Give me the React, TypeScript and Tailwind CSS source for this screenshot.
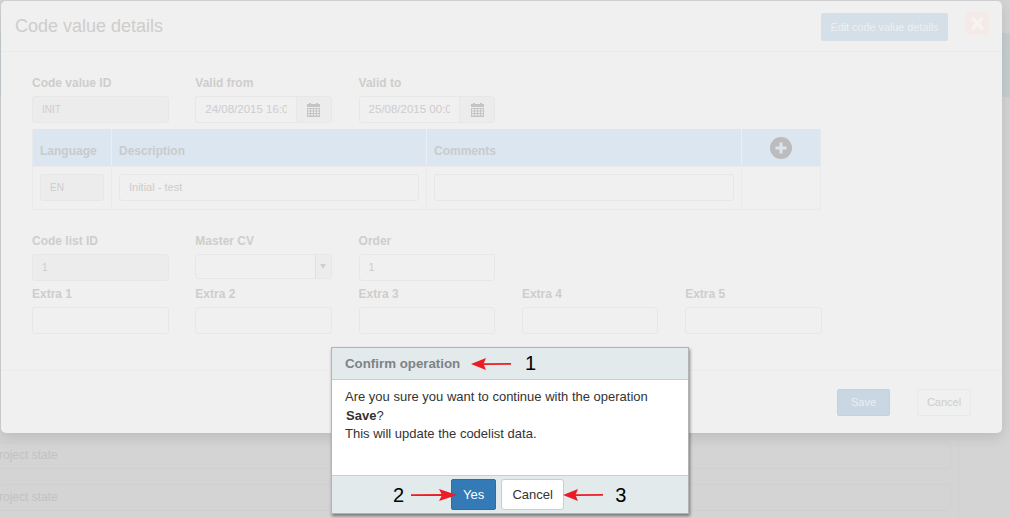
const Label = ({ children }: { children: string }) => (
  <label className="block h-[13px] text-[12px] leading-[13px] font-bold text-[#cfcdcb]">{children}</label>
);

const Box = ({ value, grey }: { value?: string; grey?: boolean }) => (
  <div
    className={`h-[27px] mt-[6px] px-[9px] border border-[#e7e7e7] rounded-[3px] leading-[25px] text-[#cdcdcd] ${grey ? "text-[10px] bg-[#ececec]" : "text-[11px] bg-[#f0f0f0]"}`}
  >
    {value}
  </div>
);

const Field = ({ label, value, grey }: { label: string; value?: string; grey?: boolean }) => (
  <div>
    <Label>{label}</Label>
    <Box value={value} grey={grey} />
  </div>
);

const CalendarIcon = () => (
  <svg width="13" height="14" viewBox="0 0 13 14" className="fill-[#c4c4c4]">
    <rect x="2" y="0" width="2" height="3" />
    <rect x="9" y="0" width="2" height="3" />
    <rect x="0" y="1" width="13" height="3" />
    <path d="M0 5h13v9H0z M1 6v1.5h2V6z M4 6v1.5h2V6z M7 6v1.5h2V6z M10 6v1.5h2V6z M1 8.5V10h2V8.5z M4 8.5V10h2V8.5z M7 8.5V10h2V8.5z M10 8.5V10h2V8.5z M1 11v1.5h2V11z M4 11v1.5h2V11z M7 11v1.5h2V11z M10 11v1.5h2V11z" fillRule="evenodd" />
  </svg>
);

const DateField = ({ label, value }: { label: string; value: string }) => (
  <div>
    <Label>{label}</Label>
    <div className="flex h-[27px] mt-[6px] border border-[#e7e7e7] rounded-[3px] text-[11.5px] text-[#cdcdcd]">
      <div className="flex-1 min-w-0 pl-[9px] pr-[9px] leading-[25px]">
        <div className="overflow-hidden whitespace-nowrap">{value}</div>
      </div>
      <div className="w-[35px] shrink-0 flex items-center justify-center bg-[#ececec] border-l border-[#e7e7e7] rounded-r-[3px]">
        <CalendarIcon />
      </div>
    </div>
  </div>
);

// little red hand-drawn arrows from the annotated screenshot
const ArrowLeft = () => (
  <svg width="40" height="14" viewBox="0 0 40 14" className="shrink-0">
    <path d="M12 6.3L40 5.9v1.8L12 8.1z" fill="#ed1c24" />
    <path d="M0 7L15 1l-2.5 6L15 13z" fill="#ed1c24" />
  </svg>
);

const ArrowRight = () => (
  <svg width="46" height="14" viewBox="0 0 46 14" className="shrink-0">
    <path d="M0 6.3L34 6.1v1.8L0 8.1z" fill="#ed1c24" />
    <path d="M46 7L28 1l3 6-3 6z" fill="#ed1c24" />
  </svg>
);

const Num = ({ children }: { children: string }) => (
  <span className="text-[20px] leading-[24px] text-black">{children}</span>
);

const BgRow = () => (
  <div className="flex h-[42px]">
    <div className="w-[953px] shrink-0 -ml-[2px] h-[27px] pt-[5px] border border-[#d0d0d0] rounded-[3px] text-[12px] leading-[15px] text-[#c2c2c2]">
      roject state
    </div>
    <div className="ml-[7px] flex-1 border-l border-[#d0d0d0]" />
  </div>
);

const App = () => {
  return (
    <div className="relative w-[1010px] h-[518px] overflow-hidden bg-[#d4d4d4] font-['Liberation_Sans',Arial,sans-serif]">
      {/* page behind the modal */}
      <div className="flex flex-col">
        <div className="h-[33px]" />
        <div className="h-[64px] bg-[#c6ced2]" />
        <div className="h-[345px]" />
        <BgRow />
        <BgRow />
      </div>

      {/* main modal, faded */}
      <div className="absolute left-[1px] top-[1px] w-[1001px] h-[432px] bg-[#f0f0f0] rounded-[5px] shadow-[0_4px_14px_rgba(0,0,0,0.12)]">
        <div className="flex items-center h-[51px] border-b border-[#ebebeb] pl-[14px]">
          <h4 className="text-[18px] text-[#cfcdcb]">Code value details</h4>
          <button className="ml-auto h-[28px] w-[127px] mt-[1px] pt-[2px] bg-[#d5dfe8] rounded-[2px] text-[10.8px] text-[#eef0f2]">
            Edit code value details
          </button>
          <div className="w-[23px] h-[23px] ml-[18px] mr-[13px] -mt-[5px] rounded-[3px] bg-[#f4ebe8] flex items-center justify-center">
            <svg width="15" height="15" viewBox="0 0 15 15">
              <path d="M3 3l9 9M12 3l-9 9" stroke="#f7f3f1" strokeWidth="3.4" strokeLinecap="round" />
            </svg>
          </div>
        </div>

        <div className="h-[318px] pl-[31px] pt-[25px]">
          <div className="grid w-[789.7px] grid-cols-5 gap-x-[26.8px]">
            <Field label="Code value ID" value="INIT" grey />
            <DateField label="Valid from" value="24/08/2015 16:00" />
            <DateField label="Valid to" value="25/08/2015 00:00" />
          </div>

          <div className="w-[789px] h-[81px] mt-[6px] border-l border-r border-b border-[#e9e9e9]">
            <div className="grid grid-cols-[78px_315px_315px_1fr] h-[38px] bg-[#dce6f0] border-b border-[#ebebeb] text-[12px] font-bold text-[#c8cbcd]">
              <div className="pl-[7px] pt-[16px] leading-[13px]">Language</div>
              <div className="pl-[7px] pt-[16px] leading-[13px] border-l border-[#ebeff3]">Description</div>
              <div className="pl-[7px] pt-[16px] leading-[13px] border-l border-[#ebeff3]">Comments</div>
              <div className="flex justify-center pt-[8px] border-l border-[#ebeff3]">
                <svg width="22" height="22" viewBox="0 0 22 22">
                  <circle cx="11" cy="11" r="11" fill="#bcbcbc" />
                  <path d="M11 5.5v11M5.5 11h11" stroke="#dce6f0" strokeWidth="3" />
                </svg>
              </div>
            </div>
            <div className="grid grid-cols-[78px_315px_315px_1fr] h-[42px] text-[#cdcdcd]">
              <div className="px-[7px] pt-[7px]">
                <div className="h-[27px] pl-[9px] text-[10px] leading-[25px] bg-[#ececec] border border-[#e7e7e7] rounded-[3px]">EN</div>
              </div>
              <div className="pl-[7px] pr-[7px] pt-[7px] border-l border-[#e9e9e9]">
                <div className="h-[27px] pl-[9px] text-[11px] leading-[25px] border border-[#e7e7e7] rounded-[3px]">Initial - test</div>
              </div>
              <div className="pl-[7px] pr-[7px] pt-[7px] border-l border-[#e9e9e9]">
                <div className="h-[27px] border border-[#e7e7e7] rounded-[3px]" />
              </div>
              <div className="border-l border-[#e9e9e9]" />
            </div>
          </div>

          <div className="grid w-[789.7px] grid-cols-5 gap-x-[26.8px] mt-[25px]">
            <Field label="Code list ID" value="1" grey />
            <div>
              <Label>Master CV</Label>
              <div className="flex h-[25px] mt-[6px] border border-[#e7e7e7] rounded-[3px]">
                <div className="flex-1" />
                <div className="w-[16px] flex items-center justify-center bg-[#ececec] border-l border-[#e0e0e0] rounded-r-[3px]">
                  <div className="w-0 h-0 border-x-[3.5px] border-x-transparent border-t-[5px] border-t-[#cfcfcf]" />
                </div>
              </div>
            </div>
            <Field label="Order" value="1" />
          </div>
          <div className="grid w-[789.7px] grid-cols-5 gap-x-[26.8px] mt-[7px]">
            <Field label="Extra 1" />
            <Field label="Extra 2" />
            <Field label="Extra 3" />
            <Field label="Extra 4" />
            <Field label="Extra 5" />
          </div>
        </div>

        <div className="flex justify-end items-start h-[63px] border-t border-[#ebebeb] pt-[18px] pr-[31px] text-[11px]">
          <button className="w-[53px] h-[27px] bg-[#c9d7e4] border border-[#c3d2e0] rounded-[2px] text-[#ebeef1]">Save</button>
          <button className="w-[54px] h-[27px] ml-[27px] border border-[#e9e9e9] rounded-[2px] text-[#cdcdcd]">Cancel</button>
        </div>
      </div>

      {/* confirm dialog on top */}
      <div className="absolute left-[331px] top-[347px] w-[358px] h-[167px] flex flex-col bg-white border border-[#b4b4b4] shadow-[1px_2px_3px_rgba(0,0,0,0.45)]">
        <div className="flex items-center h-[32px] shrink-0 pl-[13px] bg-[#e2eaec] border-b border-[#c5cfd4]">
          <span className="w-[126px] shrink-0 text-[13.3px] font-bold text-[#7d8387]">Confirm operation</span>
          <ArrowLeft />
          <div className="ml-[14px]">
            <Num>1</Num>
          </div>
        </div>
        <div className="flex-1 pl-[13px] pt-[8px] text-[13px] leading-[18.5px] text-[#333]">
          <p>Are you sure you want to continue with the operation</p>
          <p className="pl-[1px]"><b>Save</b>?</p>
          <p>This will update the codelist data.</p>
        </div>
        <div className="flex items-center h-[38px] shrink-0 bg-[#e2eaec] border-t border-[#c5cfd4] pl-[61px]">
          <Num>2</Num>
          <div className="relative z-10 ml-[7px] -mr-[6px]">
            <ArrowRight />
          </div>
          <button className="w-[45px] h-[31px] bg-[#337ab7] border border-[#2e6da4] rounded-[2px] text-[13px] text-white">Yes</button>
          <button className="w-[63px] h-[31px] ml-[5px] bg-white border border-[#ccc] rounded-[3px] text-[13px] text-[#333]">Cancel</button>
          <div className="-ml-[1px] mr-[12px]">
            <ArrowLeft />
          </div>
          <Num>3</Num>
        </div>
      </div>
    </div>
  );
};

export default App;
